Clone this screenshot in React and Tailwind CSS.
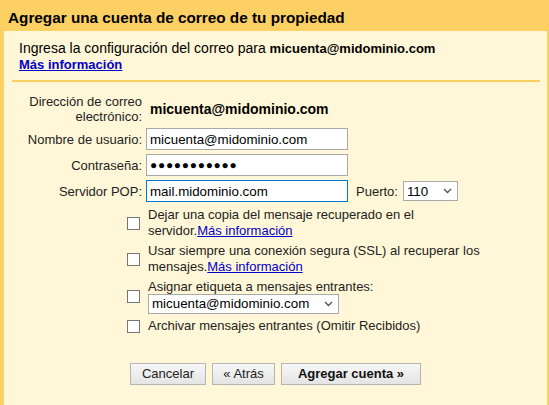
import { useState } from "react";

function Chevron() {
    return (
        <svg className="pointer-events-none absolute right-[6px] top-1/2 -translate-y-1/2" width="9" height="6" viewBox="0 0 9 6">
            <polyline points="1,1 4.5,4.5 8,1" fill="none" stroke="#555" strokeWidth="1.4" />
        </svg>
    );
}

function Select({ value, options, width }) {
    return (
        <div className={`relative h-[20px] ${width}`}>
            <select
                defaultValue={value}
                className="h-full w-full appearance-none border border-[#a9a9a9] bg-white pl-[3px] text-[13.33px] text-black outline-none"
            >
                {options.map((o) => (
                    <option key={o}>{o}</option>
                ))}
            </select>
            <Chevron />
        </div>
    );
}

function Check({ children }) {
    const [on, setOn] = useState(false);
    return (
        <div className="flex items-center gap-[8px]">
            <button
                onClick={() => setOn(!on)}
                className="h-[13px] w-[13px] shrink-0 border border-[#767676] bg-white text-[10px] leading-[11px]"
            >
                {on ? "✓" : ""}
            </button>
            <div className="w-[380px]">{children}</div>
        </div>
    );
}

const link = "text-[#0000cc] underline whitespace-nowrap";

export default function App() {
    return (
        <div className="flex h-[405px] w-[549px] flex-col bg-[#fcd063] font-['Liberation_Sans',Arial,sans-serif] text-[13px] text-[#222]">
            <div className="h-[31px] pl-[8px] pt-[9px] text-[15.3px] font-bold leading-[18px] text-black">
                Agregar una cuenta de correo de tu propiedad
            </div>

            <div className="ml-[4px] mr-[2px] flex-1 bg-[#fff7d7] pt-[9px]">
                <div className="px-[15px] leading-[16px] text-black">
                    <div>
                        <span className="text-[14px]">Ingresa la configuración del correo para </span>
                        <b>micuenta@midominio.com</b>
                    </div>
                    <a href="#" className="font-bold text-[#0000cc] underline">
                        Más información
                    </a>
                </div>

                <div className="ml-[8px] mr-[7px] mt-[7px] h-[2px] bg-[#f9cf5f]" />

                {/* account fields */}
                <div className="mt-[12px] grid grid-cols-[115px_auto] gap-x-[4px] gap-y-[4px] pl-[23px] leading-[15px]">
                    <div className="text-right">Dirección de correo electrónico:</div>
                    <div className="self-center pl-[4px] text-[14px] font-bold text-black">micuenta@midominio.com</div>

                    <div className="self-center text-right">Nombre de usuario:</div>
                    <input
                        defaultValue="micuenta@midominio.com"
                        className="h-[22px] w-[202px] border border-[#a9a9a9] bg-white px-[3px] text-[13.33px] text-black outline-none"
                    />

                    <div className="self-center text-right">Contraseña:</div>
                    <input
                        defaultValue="●●●●●●●●●●●"
                        className="h-[22px] w-[202px] border border-[#a9a9a9] bg-white px-[3px] text-[12px] tracking-[0.7px] text-black outline-none"
                    />

                    <div className="self-center text-right">Servidor POP:</div>
                    <div className="flex items-center">
                        <input
                            defaultValue="mail.midominio.com"
                            className="h-[22px] w-[202px] border border-[#0078d7] bg-white px-[3px] text-[13.33px] text-black outline-none"
                        />
                        <span className="ml-[8px] mr-[5px]">Puerto:</span>
                        <Select value="110" options={["110", "995"]} width="w-[55px]" />
                    </div>
                </div>

                {/* options */}
                <div className="mt-[5px] flex flex-col gap-[4px] pl-[123px] leading-[16px]">
                    <Check>
                        <span>Dejar una copia del mensaje recuperado en el </span>
                        <span>servidor.</span>
                        <a href="#" className={link}>Más información</a>
                    </Check>
                    <Check>
                        <span>Usar siempre una conexión segura (SSL) al recuperar los </span>
                        <span>mensajes.</span>
                        <a href="#" className={link}>Más información</a>
                    </Check>
                    <Check>
                        <div className="leading-[15px]">Asignar etiqueta a mensajes entrantes:</div>
                        <Select value="micuenta@midominio.com" options={["micuenta@midominio.com"]} width="w-[191px]" />
                    </Check>
                    <Check>Archivar mensajes entrantes (Omitir Recibidos)</Check>
                </div>

                <div className="mt-[29px] flex justify-center gap-[6px]">
                    <button className="h-[22px] w-[76px] border border-[#b5b5b5] bg-gradient-to-b from-[#f7f7f7] to-[#e4e4e4] text-[#222]">
                        Cancelar
                    </button>
                    <button className="h-[22px] w-[63px] border border-[#b5b5b5] bg-gradient-to-b from-[#f7f7f7] to-[#e4e4e4] text-[#222]">
                        « Atrás
                    </button>
                    <button className="h-[22px] w-[140px] border border-[#b5b5b5] bg-gradient-to-b from-[#f7f7f7] to-[#e4e4e4] font-bold text-[#111]">
                        Agregar cuenta »
                    </button>
                </div>
            </div>
        </div>
    );
}
